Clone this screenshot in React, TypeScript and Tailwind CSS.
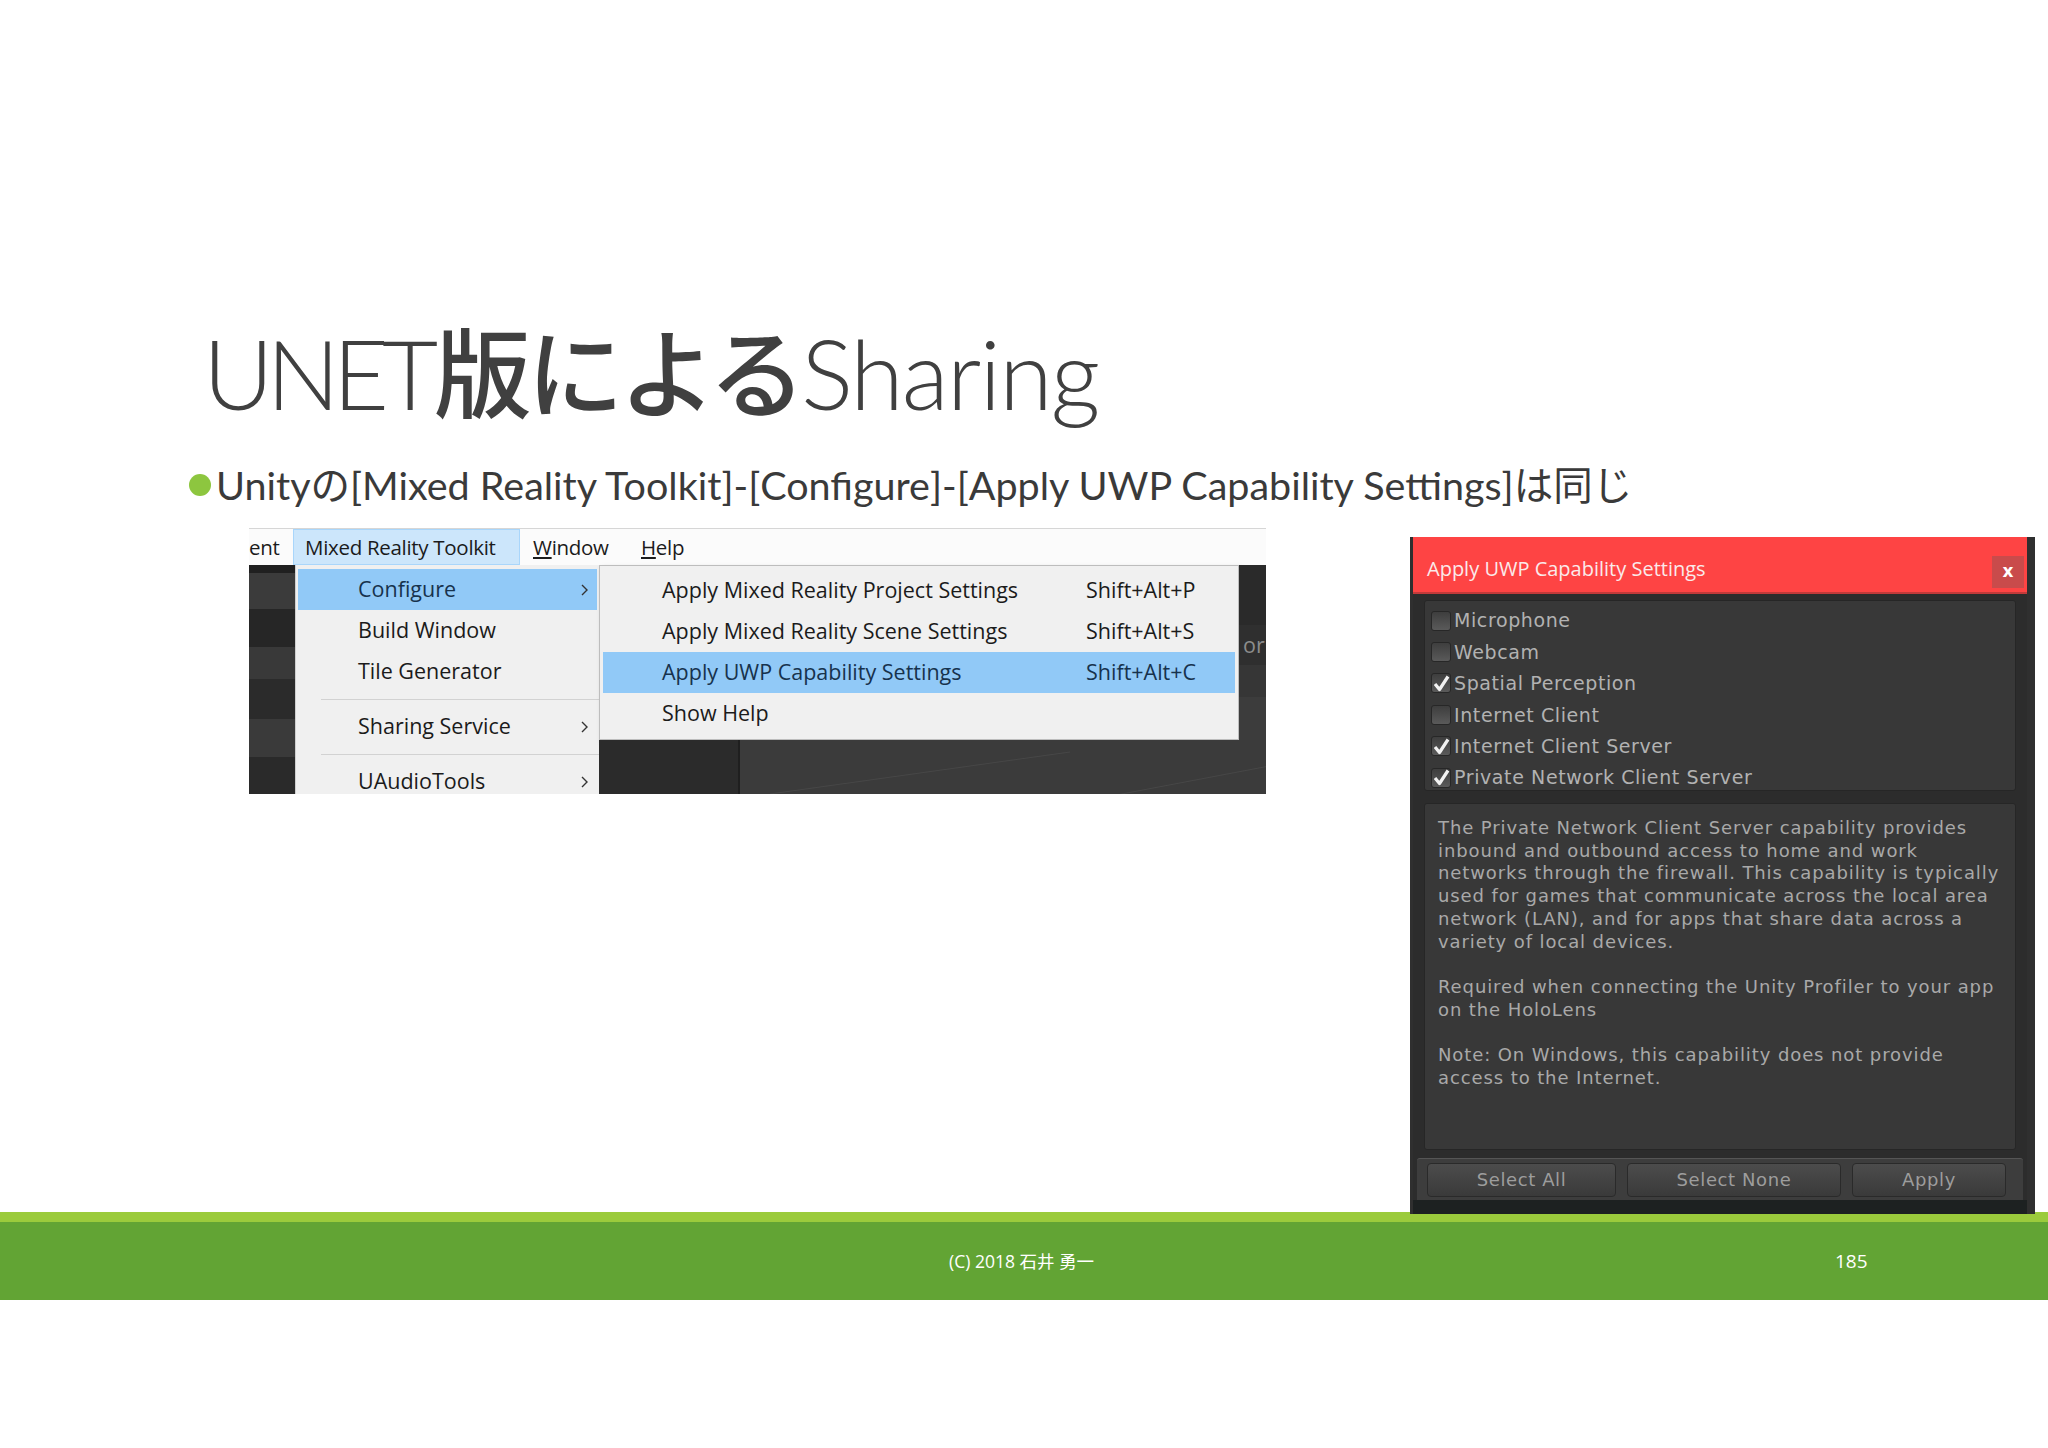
import React from 'react';

const checks = [
  { label: 'Microphone', on: false },
  { label: 'Webcam', on: false },
  { label: 'Spatial Perception', on: true },
  { label: 'Internet Client', on: false },
  { label: 'Internet Client Server', on: true },
  { label: 'Private Network Client Server', on: true },
];

const description = [
  [
    'The Private Network Client Server capability provides',
    'inbound and outbound access to home and work',
    'networks through the firewall. This capability is typically',
    'used for games that communicate across the local area',
    'network (LAN), and for apps that share data across a',
    'variety of local devices.',
  ],
  ['Required when connecting the Unity Profiler to your app', 'on the HoloLens'],
  ['Note: On Windows, this capability does not provide', 'access to the Internet.'],
];

const Chevron = () => (
  <svg width="10" height="14" viewBox="0 0 10 14" className="shrink-0">
    <path d="M3 2 L8 7 L3 12" stroke="#333" strokeWidth="1.4" fill="none" />
  </svg>
);

const CheckBox = ({ on }: { on: boolean }) => (
  <span className="flex h-[20px] w-[20px] shrink-0 items-center justify-center rounded-[3px] border border-[#272727] bg-linear-to-b from-[#3e3e3e] to-[#5a5a5a]">
    {on && (
      <svg width="19" height="19" viewBox="0 0 18 18">
        <path d="M3 9.5 L7.5 15 L16 2" stroke="#f2f2f2" strokeWidth="3.2" fill="none" strokeLinejoin="round" />
      </svg>
    )}
  </span>
);

// left: screenshot of the Unity menu
const UnityMenu = () => (
  <div className="flex h-[266px] w-[1017px] shrink-0 flex-col overflow-hidden font-[family-name:'Open_Sans',sans-serif] text-[21.5px] text-[#1b1b1b]">
    {/* menu bar */}
    <div className="flex h-[37px] shrink-0 items-stretch border-t border-[#d6d6d6] bg-[#fbfbfb] text-[20.5px] tracking-[-0.3px]">
      <span className="flex w-[44px] items-center">ent</span>
      <span className="flex w-[227px] items-center border border-[#a9d6fb] bg-[#cce6fb] pl-[11px]">Mixed Reality Toolkit</span>
      <span className="ml-[13px] flex w-[108px] items-center">
        <span className="underline underline-offset-2">W</span>indow
      </span>
      <span className="flex items-center">
        <span className="underline underline-offset-2">H</span>elp
      </span>
    </div>

    <div className="flex min-h-0 flex-1">
      {/* editor background, left edge */}
      <div className="flex w-[46px] shrink-0 flex-col">
        <div className="h-[8px] bg-[#202020]" />
        <div className="h-[36px] bg-[#3b3b3b]" />
        <div className="h-[38px] bg-[#262626]" />
        <div className="h-[32px] bg-[#393939]" />
        <div className="h-[40px] bg-[#2b2b2b]" />
        <div className="h-[38px] bg-[#3a3a3a]" />
        <div className="flex-1 bg-[#2a2a2a]" />
      </div>

      {/* first dropdown */}
      <div className="flex w-[304px] shrink-0 flex-col border-l border-[#cfcfcf] bg-[#f0f0f0] pt-[4px]">
        <div className="mx-[2px] flex h-[41px] shrink-0 items-center justify-between bg-[#91c9f7] pl-[60px] pr-[8px] text-[#17324d]">
          Configure <Chevron />
        </div>
        <div className="flex h-[41px] shrink-0 items-center pl-[62px]">Build Window</div>
        <div className="flex h-[41px] shrink-0 items-center pl-[62px]">Tile Generator</div>
        <div className="flex h-[14px] shrink-0 items-center pl-[25px]">
          <div className="h-px flex-1 bg-[#d2d2d2]" />
        </div>
        <div className="flex h-[41px] shrink-0 items-center justify-between pl-[62px] pr-[10px]">
          Sharing Service <Chevron />
        </div>
        <div className="flex h-[14px] shrink-0 items-center pl-[25px]">
          <div className="h-px flex-1 bg-[#d2d2d2]" />
        </div>
        <div className="flex h-[41px] shrink-0 items-center justify-between pl-[62px] pr-[10px]">
          UAudioTools <Chevron />
        </div>
      </div>

      {/* submenu + editor behind */}
      <div className="flex min-w-0 flex-1 flex-col bg-[#2d2d2d]">
        <div className="flex h-[175px] shrink-0">
          <div className="flex w-[640px] shrink-0 flex-col border border-[#bdbdbd] bg-[#f0f0f0] pt-[4px] shadow-[3px_3px_4px_rgba(0,0,0,0.5)]">
            <div className="flex h-[41px] shrink-0 items-center pl-[62px]">
              <span className="w-[424px]">Apply Mixed Reality Project Settings</span>
              <span>Shift+Alt+P</span>
            </div>
            <div className="flex h-[41px] shrink-0 items-center pl-[62px]">
              <span className="w-[424px]">Apply Mixed Reality Scene Settings</span>
              <span>Shift+Alt+S</span>
            </div>
            <div className="mx-[3px] flex h-[41px] shrink-0 items-center bg-[#91c9f7] pl-[59px] text-[#17324d]">
              <span className="w-[424px]">Apply UWP Capability Settings</span>
              <span>Shift+Alt+C</span>
            </div>
            <div className="flex h-[41px] shrink-0 items-center pl-[62px]">Show Help</div>
          </div>
          <div className="flex min-w-0 flex-1 flex-col">
            <div className="h-[60px] bg-[#2a2a2a]" />
            <div className="flex h-[40px] items-center overflow-hidden bg-[#2f2f2f] pl-[4px] text-[#8c8c8c]">or</div>
            <div className="h-[32px] bg-[#363636]" />
            <div className="flex-1 bg-[#3c3c3c]" />
          </div>
        </div>
        <div className="flex flex-1">
          <div className="w-[139px] bg-[#2b2b2b]" />
          <div className="w-[2px] bg-[#1f1f1f]" />
          <div className="relative flex-1 overflow-hidden bg-[#3b3b3b]">
            <svg width="540" height="60" className="absolute left-0 top-0">
              <path d="M30 54 L330 12" stroke="#474747" strokeWidth="1" />
              <path d="M350 60 L540 24" stroke="#474747" strokeWidth="1" />
            </svg>
          </div>
        </div>
      </div>
    </div>
  </div>
);

// right: Unity editor window
const CapabilityDialog = () => (
  <div className="relative z-10 mt-[9px] flex h-[677px] w-[625px] shrink-0 flex-col border-l-[3px] border-r-[8px] border-[#2f2f2f] bg-[#2c2c2c] font-[family-name:'DejaVu_Sans',sans-serif]">
    <div className="flex h-[57px] shrink-0 items-center justify-between border-b-2 border-[#c23a3a] bg-[#fe4444] pl-[14px] pr-[3px] pt-[8px]">
      <span className="font-[family-name:'Open_Sans',sans-serif] text-[20px] text-[#fbeaea]">Apply UWP Capability Settings</span>
      <span className="mt-[6px] flex h-[32px] w-[32px] items-center justify-center bg-[#c94b4b] text-[17px] font-bold text-white">x</span>
    </div>

    <div className="mx-[11px] mt-[6px] flex h-[191px] shrink-0 flex-col overflow-hidden rounded-[3px] border border-[#262626] bg-[#383838] pl-[6px] pt-[4px]">
      {checks.map((c) => (
        <div key={c.label} className="flex h-[31.4px] shrink-0 items-center gap-[3px] text-[19px] tracking-[0.6px] text-[#b2b2b2]">
          <CheckBox on={c.on} />
          <span>{c.label}</span>
        </div>
      ))}
    </div>

    <div className="mx-[11px] mt-[12px] flex h-[347px] shrink-0 flex-col gap-[22.7px] rounded-[3px] border border-[#262626] bg-[#383838] pl-[13px] pt-[13px] text-[18px] leading-[22.7px] tracking-[0.9px] text-[#a9a9a9]">
      {description.map((p, i) => (
        <div key={i}>
          {p.map((l) => (
            <div key={l} className="whitespace-nowrap">{l}</div>
          ))}
        </div>
      ))}
    </div>

    <div className="mx-[4px] mt-[8px] flex h-[42px] shrink-0 items-center gap-[11px] rounded-t-[3px] border-t border-[#555] bg-[#3d3d3d] px-[10px] text-[18px] tracking-[0.6px] text-[#9d9d9d]">
      <div className="flex h-[34px] w-[189px] items-center justify-center rounded-[4px] border border-[#2a2a2a] bg-linear-to-b from-[#4c4c4c] to-[#3a3a3a]">Select All</div>
      <div className="flex h-[34px] w-[214px] items-center justify-center rounded-[4px] border border-[#2a2a2a] bg-linear-to-b from-[#4c4c4c] to-[#3a3a3a]">Select None</div>
      <div className="flex h-[34px] w-[154px] items-center justify-center rounded-[4px] border border-[#2a2a2a] bg-linear-to-b from-[#4c4c4c] to-[#3a3a3a]">Apply</div>
    </div>
    <div className="flex-1 bg-[#1d2121]" />
  </div>
);

export default function App() {
  return (
    <div className="flex h-[1448px] w-[2048px] flex-col overflow-hidden bg-white">
      <div className="flex h-[1212px] shrink-0 flex-col">
        {/* title */}
        <h1 className="ml-[203px] mt-[324px] whitespace-nowrap font-[family-name:Lato,'Noto_Sans_CJK_JP',sans-serif] text-[97px] font-light leading-none tracking-[-1.8px] text-[#404040]">
          <span className="tracking-[-7px]">UNET</span>
          <span className="ml-[3px] font-medium tracking-[-4.5px]">版による</span>
          Sharing
        </h1>
        <div className="ml-[200px] mt-[18px] h-[2px] w-[1674px] bg-[#a3a3a3]" />

        {/* bullet */}
        <div className="ml-[189px] mt-[21px] flex h-[50px] items-center gap-[5px] font-[family-name:Lato,'Noto_Sans_CJK_JP',sans-serif] text-[39.5px] text-[#3a3a3a]">
          <span className="h-[22px] w-[22px] shrink-0 rounded-full bg-[#8dc63f]" />
          <span className="whitespace-nowrap">Unityの[Mixed Reality Toolkit]-[Configure]-[Apply UWP Capability Settings]は同じ</span>
        </div>

        {/* screenshots */}
        <div className="ml-[249px] mt-[18px] flex items-start gap-[144px]">
          <UnityMenu />
          <CapabilityDialog />
        </div>
      </div>

      {/* footer */}
      <div className="h-[10px] shrink-0 bg-[#9bcb3c]" />
      <div className="flex h-[78px] shrink-0 items-center bg-[#62a434] font-[family-name:'Open_Sans','Noto_Sans_CJK_JP',sans-serif] text-white">
        <span className="ml-[949px] w-[148px] whitespace-nowrap text-[17.5px]">(C) 2018 石井 勇一</span>
        <span className="ml-[738px] text-[19px]">185</span>
      </div>
    </div>
  );
}
